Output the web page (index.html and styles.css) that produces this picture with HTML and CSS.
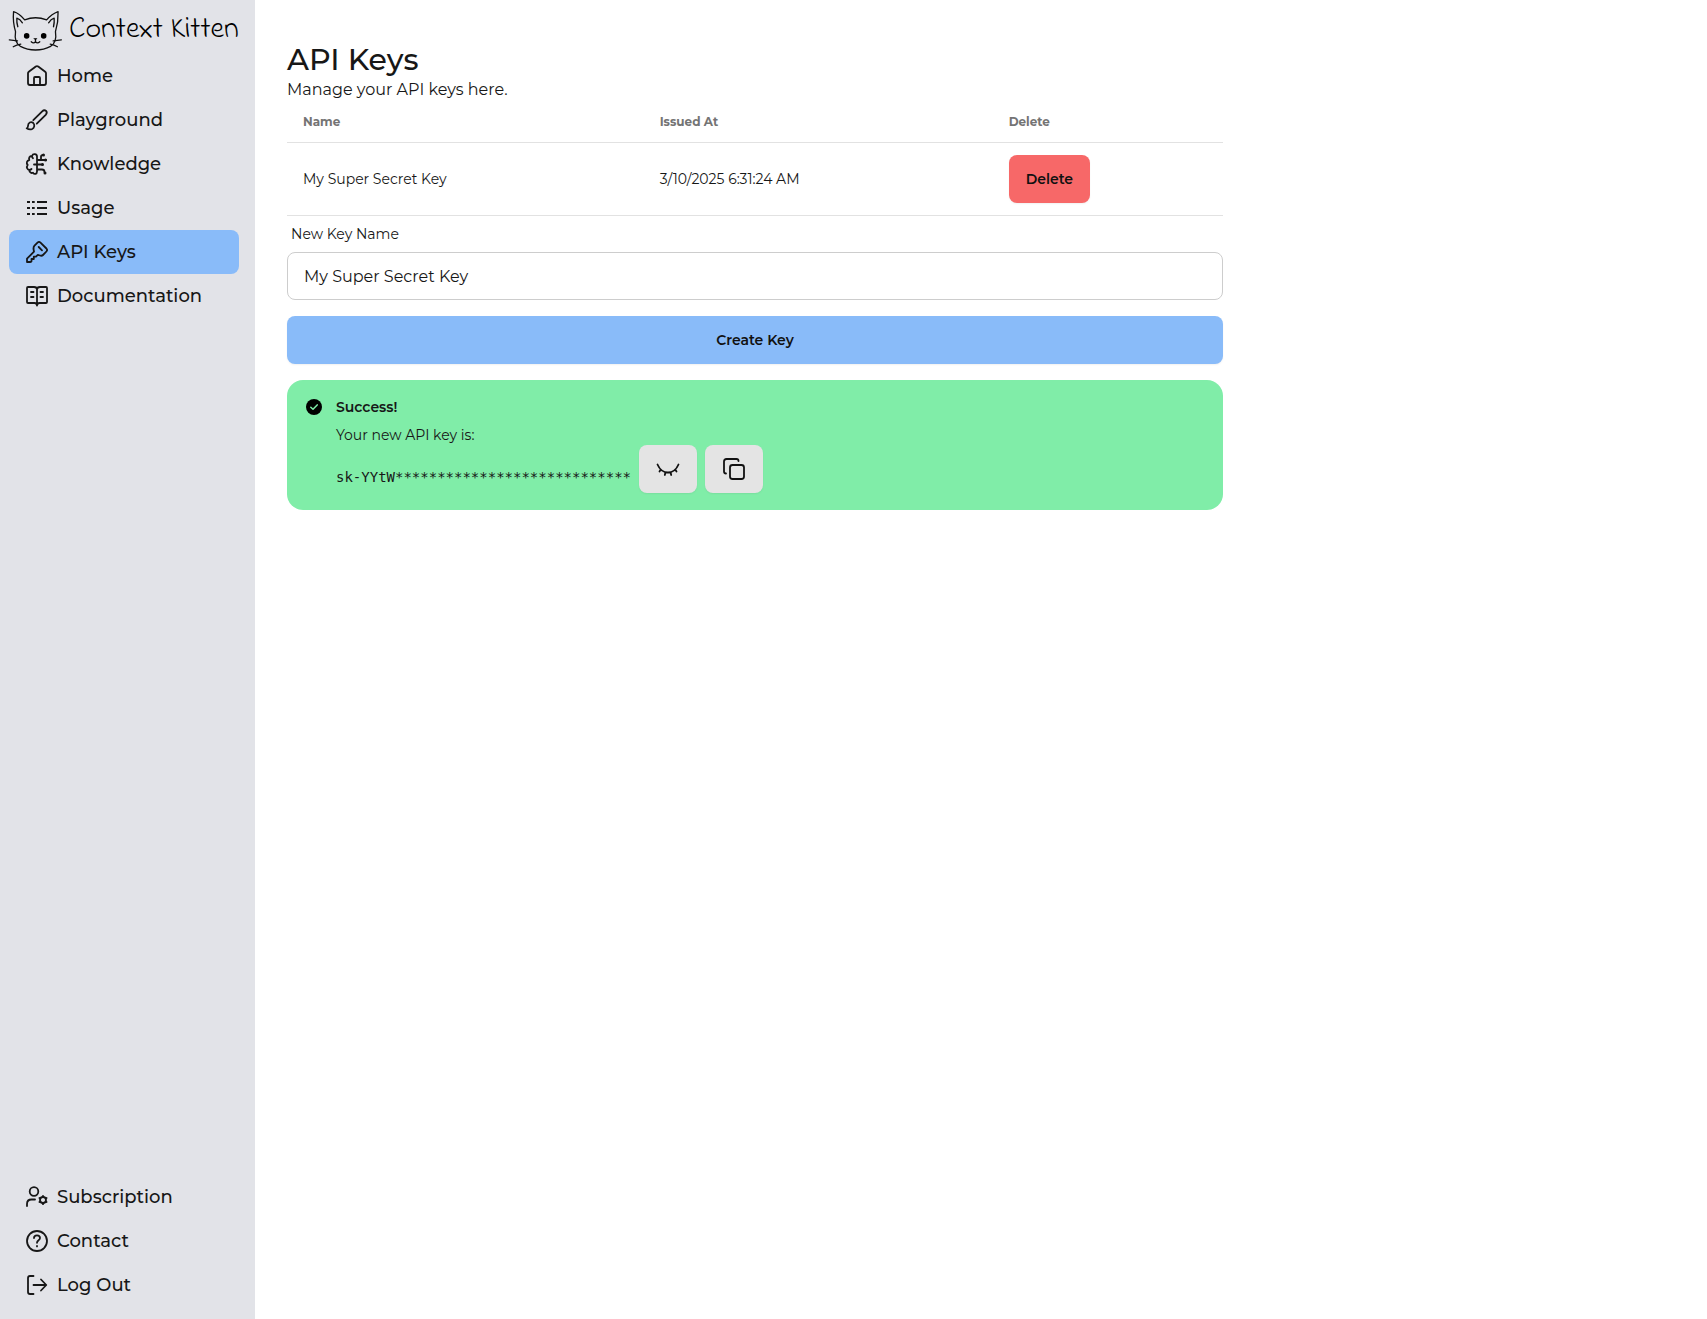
FILE: index.html
```html
<!DOCTYPE html>
<html lang="en">
<head>
<meta charset="utf-8">
<meta name="viewport" content="width=device-width, initial-scale=1">
<title>API Keys - Context Kitten</title>
<link rel="stylesheet" href="styles.css">
</head>
<body>
<div class="app">
  <aside class="sidebar">
    <a class="brand" href="#">
      <svg class="brand-cat" viewBox="24 24 168 129" aria-hidden="true">
        <path d="M75 56 Q58 36 41 31 Q38 62 47 92 Q42 125 62 137 Q82 148 108 148 Q134 148 154 137 Q174 125 169 92 Q178 62 177 31 Q158 38 142 56 Q108 43 75 56Z"/>
        <path d="M54 77 Q50 64 51 51 Q61 54 68 65M163 77 Q166 64 165 51 Q155 54 148 65M28 117L53 120M40 138Q50 132 63 130M187 117L162 120M175 138Q165 132 153 130M108 116V123Q102 130 95 123M108 123Q114 130 121 123"/>
        <g class="solid"><circle cx="81" cy="105" r="8.500"/><circle cx="133" cy="105" r="8.500"/><path d="M101 112H114L108 118Z"/></g>
      </svg>
      <span>Context Kitten</span>
    </a>
    <nav class="menu" aria-label="Main">
      <a href="#"><svg class="icon" viewBox="0 0 24 24"><path d="M3 9.300V19a2 2 0 0 0 2 2H19a2 2 0 0 0 2-2V9.300a2 2 0 0 0-.8-1.600L13.200 2.500a2 2 0 0 0-2.400 0L3.800 7.700A2 2 0 0 0 3 9.300ZM9 21V14a1 1 0 0 1 1-1h4a1 1 0 0 1 1 1V21"/></svg>Home</a>
      <a href="#"><svg class="icon" viewBox="0 0 24 24"><path d="M8.300 12.200L17.200 3.300Q19.200 1.400 21.100 2.900Q22.600 4.800 20.700 6.800L11.800 15.700M1.700 20.300Q2.900 20 3 18C3 14.500 6 13.300 8.300 15C10.200 17 9.200 20 7.200 21Q4.500 22.200 1.700 20.300Z"/></svg>Playground</a>
      <a href="#"><svg class="icon" viewBox="0 0 24 24"><path d="M12 7V4.500C12 1.800 8 1.200 7 4C4.500 3.800 3.500 6 4.300 8C1.800 8.500 1 11.300 2.700 13C1 15.300 2.300 17.700 4.300 18C4.300 20.500 6.500 21.500 8 20.700C9.500 23 12 21.800 12 19.500V7M7 4Q7 5.500 8 6.200M4.300 18Q5.500 18 6.500 17M12 8H21M16 8V4.500Q16 3 18 3M12 12.500H17.500M12 17.500H17Q19.500 17.500 19.500 20M9 12.500H12"/><g class="solid"><circle cx="18.500" cy="3" r="1.500"/><circle cx="20.500" cy="8" r="1.500"/><circle cx="17.500" cy="12.500" r="1.500"/><circle cx="20" cy="21" r="1.500"/></g></svg>Knowledge</a>
      <a href="#"><svg class="icon icon-list" viewBox="0 0 24 24"><path d="M2 6H5M7 6H9.700M12 6H22M2 12H5M7 12H9.700M12 12H22M2 18H5M7 18H9.700M12 18H22"/></svg>Usage</a>
      <a class="active" href="#" aria-current="page"><svg class="icon" viewBox="0 0 24 24"><path d="M12.500 2.600Q14 1.200 15.500 2.600L21.400 8.500Q22.800 10 21.400 11.500L18 15Q16.800 16.200 15 15.500L12.800 14.900L11 16.700H8.800V19H6.500V21.200Q6 22 5 22H2V18.700L9 11.700L8.500 9Q8.300 7 9.500 5.700ZM13.700 7L17 10.300"/></svg>API Keys</a>
      <a href="#"><svg class="icon" viewBox="0 0 24 24"><path d="M12 5.500Q12 3 9 3H3Q2 3 2 4V18Q2 19 3 19H9.500Q12 19 12 21.500Q12 19 14.500 19H21Q22 19 22 18V4Q22 3 21 3H15Q12 3 12 5.500V21.500M6 8H8.500M6 13H8.500M15.500 8H18M15.500 13H18"/></svg>Documentation</a>
    </nav>
    <nav class="menu menu-bottom" aria-label="Account">
      <a href="#"><svg class="icon" viewBox="0 0 24 24"><circle cx="9" cy="6.500" r="4.300"/><path d="M2 21V19Q2 14.500 6.500 14.500H10"/><circle cx="18" cy="15" r="3"/><path d="M18 10.800V12M18 18V19.200M14.400 12.900L15.400 13.500M20.600 16.500L21.600 17.100M14.400 17.100L15.400 16.500M20.600 13.500L21.600 12.900"/></svg>Subscription</a>
      <a href="#"><svg class="icon" viewBox="0 0 24 24"><circle cx="12" cy="12" r="10"/><path d="M9 9C9 5.500 15 5.500 15 9C15 11.500 12 11 12 13.800M12 17V17.400"/></svg>Contact</a>
      <a href="#"><svg class="icon" viewBox="0 0 24 24"><path d="M8.500 3H5Q3 3 3 5V19Q3 21 5 21H8.500M8.500 12H21M16 6.500L21.300 12L16 17.500"/></svg>Log Out</a>
    </nav>
  </aside>
  <main class="content">
    <h1>API Keys</h1>
    <p class="lead">Manage your API keys here.</p>
    <table class="keys">
      <thead><tr><th scope="col">Name</th><th scope="col">Issued At</th><th scope="col">Delete</th></tr></thead>
      <tbody><tr><td>My Super Secret Key</td><td>3/10/2025 6:31:24 AM</td><td><button class="btn btn-error" type="button">Delete</button></td></tr></tbody>
    </table>
    <form class="new-key">
      <label for="key-name">New Key Name</label>
      <input id="key-name" type="text" value="My Super Secret Key">
      <button class="btn btn-primary" type="button">Create Key</button>
    </form>
    <section class="alert" role="status">
      <svg class="alert-icon" viewBox="0 0 16 16" aria-hidden="true"><circle cx="8" cy="8" r="8"/><path d="M4.800 8.300L7 10.300L11.200 5.900"/></svg>
      <div class="alert-body">
        <h2>Success!</h2>
        <p>Your new API key is:</p>
        <div class="key-row">
          <code>sk-YYtW****************************</code>
          <button class="btn" type="button" aria-label="Show key"><svg class="icon" viewBox="0 0 24 24"><path d="M1.500 7.500Q5 15.500 12 15.500Q19 15.500 22.500 7.500M4.700 12.600L3.500 14.500M9.500 15.300L8.800 18M14.500 15.300L15.200 18M19.300 12.600L20.500 14.500"/></svg></button>
          <button class="btn" type="button" aria-label="Copy key"><svg class="icon" viewBox="0 0 24 24"><rect x="8" y="8" width="14" height="14" rx="2.500"/><path d="M4 16.500Q2 16.500 2 14.500V4.500Q2 2 4.500 2H14.500Q16.500 2 16.500 4"/></svg></button>
        </div>
      </div>
    </section>
  </main>
</div>
</body>
</html>
```
FILE: styles.css
```css
* {
  box-sizing: border-box;
}

body {
  margin: 0;
  background: #fff;
  color: #171717;
  font: 16px/24px Montserrat, Inter, sans-serif;
}

h1, h2, p {
  margin: 0;
}

.app {
  display: grid;
  grid-template-columns: 255px 2fr 1fr;
  min-height: 100vh;
}

.sidebar {
  display: flex;
  flex-direction: column;
  padding: 6px 16px 12px 8px;
  background: #e2e3e8;
}

.brand {
  display: flex;
  align-items: center;
  gap: 6px;
  height: 48px;
  color: #000;
  font: 400 30px/48px "Coming Soon", "Indie Flower", "Patrick Hand", "Comic Neue", Caveat, Lato, sans-serif;
  text-decoration: none;
  white-space: nowrap;
}

.brand-cat {
  flex: none;
  width: 55px;
  height: 43px;
  fill: none;
  stroke: #111;
  stroke-width: 4;
  stroke-linecap: round;
  stroke-linejoin: round;
}

.solid {
  fill: currentColor;
  stroke: none;
}

.menu {
  display: flex;
  flex-direction: column;
  padding-left: 1px;
}

.menu-bottom {
  margin-top: auto;
}

.menu a {
  display: flex;
  align-items: center;
  gap: 8px;
  height: 44px;
  padding: 0 16px;
  border-radius: 8px;
  color: inherit;
  font-size: 18px;
  font-weight: 500;
  text-decoration: none;
}

.menu a.active {
  background: #89bbf9;
}

.icon {
  flex: none;
  width: 24px;
  height: 24px;
  fill: none;
  stroke: currentColor;
  stroke-width: 1.8;
  stroke-linecap: round;
  stroke-linejoin: round;
}

.icon-list {
  stroke-linecap: butt;
}

.content {
  padding: 42px 0 32px 32px;
}

h1 {
  font-size: 30px;
  font-weight: 500;
  line-height: 36px;
}

.keys {
  width: 100%;
  border-collapse: collapse;
  font-size: 14px;
  line-height: 20px;
  text-align: left;
}

.keys th {
  height: 40px;
  padding: 0 16px;
  border-bottom: 1px solid #e2e2e2;
  color: #747474;
  font-size: 12px;
  font-weight: 700;
}

.keys td {
  padding: 12px 16px;
  border-bottom: 1px solid #e2e2e2;
}

.btn {
  display: inline-flex;
  align-items: center;
  justify-content: center;
  height: 48px;
  padding: 0 17px;
  border: 0;
  border-radius: 8px;
  background: #e4e4e4;
  box-shadow: 0 1px 2px rgb(0 0 0 / 6%);
  color: #111;
  font: 600 14px/20px Montserrat, Inter, sans-serif;
  cursor: pointer;
}

.btn-error {
  background: #f76868;
}

.btn-primary {
  background: #89bbf9;
}

.new-key {
  display: flex;
  flex-direction: column;
}

.new-key label {
  padding: 8px 4px;
  font-size: 14px;
  line-height: 20px;
}

.new-key input {
  height: 48px;
  margin-bottom: 16px;
  padding: 1px 16px 0;
  border: 1px solid #cdcdcd;
  border-radius: 8px;
  background: #fff;
  color: inherit;
  font: 16px/24px Montserrat, Inter, sans-serif;
}

.alert {
  display: flex;
  gap: 14px;
  margin-top: 16px;
  padding: 17px 19px;
  border-radius: 16px;
  background: #80eda8;
  font-size: 14px;
  line-height: 20px;
}

.alert-icon {
  flex: none;
  width: 16px;
  height: 16px;
  margin-top: 2px;
}

.alert-icon path {
  fill: none;
  stroke: #80eda8;
  stroke-width: 1.5;
  stroke-linecap: round;
  stroke-linejoin: round;
}

.alert h2 {
  margin-bottom: 8px;
  font-size: 14px;
  font-weight: 600;
}

.key-row {
  display: flex;
  align-items: center;
  gap: 8px;
}

.key-row code {
  padding-top: 16px;
  font: 14px/20px Menlo, "DejaVu Sans Mono", monospace;
}
```
